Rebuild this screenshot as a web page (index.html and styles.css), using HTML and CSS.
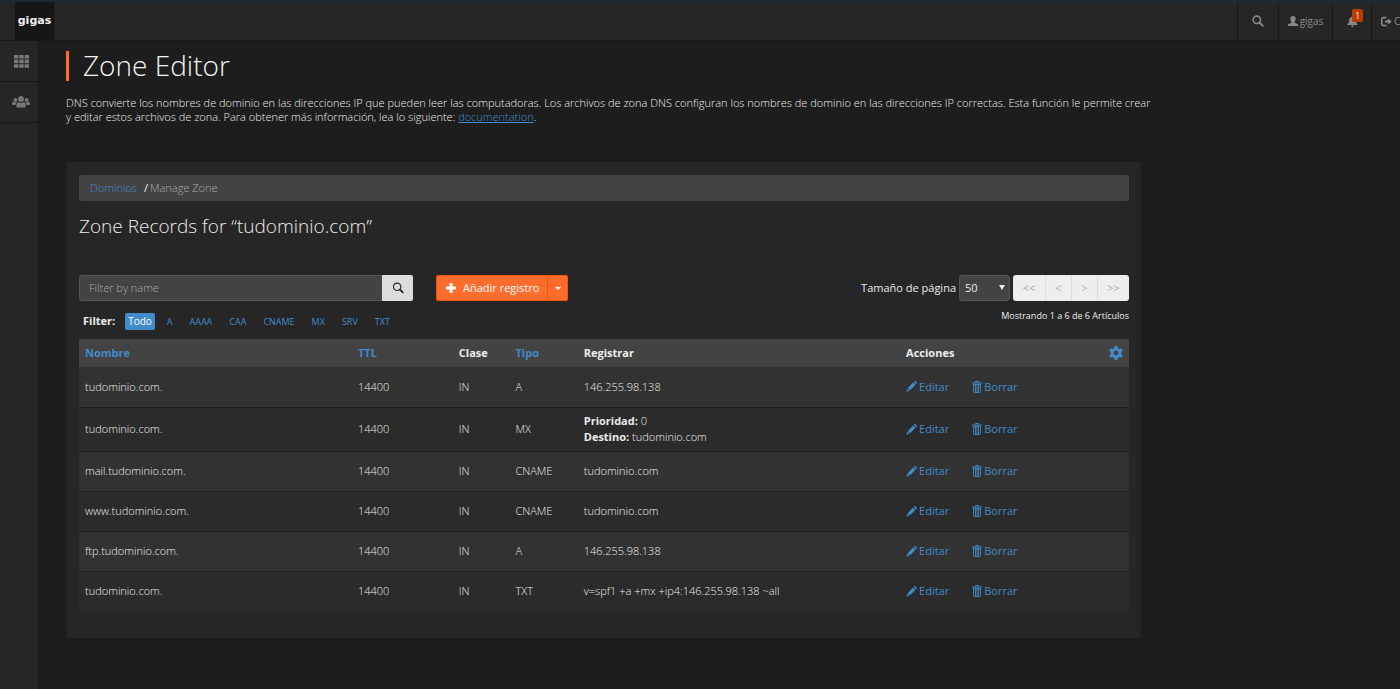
FILE: index.html
```html
<!DOCTYPE html>
<html lang="es">
<head>
<meta charset="utf-8">
<title>Zone Editor</title>
<link rel="stylesheet" href="styles.css">
</head>
<body>
<svg class="sprite" aria-hidden="true">
  <symbol id="search" viewBox="0 0 14 14"><circle cx="5.6" cy="5.6" r="4.3" fill="none" stroke="currentColor" stroke-width="1.8"/><path d="M9 9l3.6 3.6" stroke="currentColor" stroke-width="2.2" stroke-linecap="round"/></symbol>
  <symbol id="search-thin" viewBox="0 0 14 14"><circle cx="6" cy="5.6" r="4.3" fill="none" stroke="currentColor" stroke-width="1.3"/><path d="M9.2 8.8l3.4 3.4" stroke="currentColor" stroke-width="2" stroke-linecap="round"/></symbol>
  <symbol id="grid" viewBox="0 0 15 13"><path d="M0 0h4.4v3.6H0zM5.3 0h4.4v3.6H5.3zM10.6 0H15v3.6h-4.4zM0 4.6h4.4v3.6H0zM5.3 4.6h4.4v3.6H5.3zM10.6 4.6H15v3.6h-4.4zM0 9.2h4.4v3.6H0zM5.3 9.2h4.4v3.6H5.3zM10.6 9.2H15v3.6h-4.4z" fill="currentColor"/></symbol>
  <symbol id="users" viewBox="0 0 18 12"><g fill="currentColor"><circle cx="3.4" cy="4" r="1.9"/><circle cx="14.6" cy="4" r="1.9"/><circle cx="9" cy="3" r="2.9"/><path d="M4.3 10.2c0-2.4.8-4 2.2-4 .7.5 1.500.8 2.500.8s1.800-.3 2.500-.8c1.400 0 2.200 1.600 2.200 4 0 .9-.7 1.300-1.400 1.300H5.700c-.7 0-1.400-.4-1.400-1.300z"/><path d="M0 8c0-1.300.4-2.300 1.300-2.300.9.700 2.700.7 3.800 0C4.200 6.700 3.800 7.700 3.700 9H1.200C.5 9 0 8.600 0 8zM18 8c0-1.300-.4-2.300-1.300-2.300-.9.700-2.700.7-3.800 0 .9 1 1.300 2 1.400 3.300h2.500c.7 0 1.200-.4 1.200-1z"/></g></symbol>
  <symbol id="user" viewBox="0 0 10 10"><path d="M5 0c1.700 0 2.700 1.100 2.700 2.700 0 1.300-.5 2.500-1.200 3.100v.9L9.300 8c.5.200.7.600.7 1.100v.9H0v-.9C0 8.600.2 8.200.7 8l2.800-1.300v-.9C2.800 5.200 2.300 4 2.300 2.700 2.300 1.100 3.300 0 5 0z" fill="currentColor"/></symbol>
  <symbol id="bell" viewBox="0 0 10 11"><path d="M5 0c.5 0 .8.300.8.800C7.500 1.200 8.200 2.600 8.300 4.500 8.400 6.500 9 7.300 10 8.200V9H0v-.8c1-.9 1.600-1.700 1.700-3.700C1.800 2.600 2.500 1.200 4.200.8c0-.5.300-.8.800-.8zM3.600 9.600h2.800c-.1.800-.7 1.300-1.400 1.300s-1.300-.5-1.400-1.300z" fill="currentColor"/></symbol>
  <symbol id="logout" viewBox="0 0 11 10"><path d="M5.500 1H2.600C1.500 1 .8 1.700.8 2.800v4.400C.8 8.300 1.500 9 2.600 9h2.900" fill="none" stroke="currentColor" stroke-width="1.500"/><path d="M4 4h3V1.900L10.700 5 7 8.100V6H4z" fill="currentColor"/></symbol>
  <symbol id="plus" viewBox="0 0 10 10"><path d="M3.500 0h3v3.500H10v3H6.500V10h-3V6.500H0v-3h3.500z" fill="currentColor"/></symbol>
  <symbol id="pencil" viewBox="0 0 12 12"><path d="M.4 11.600l.9-3.400 2.500 2.500zM1.900 7.500l5.900-5.900 2.600 2.600-5.900 5.900zM8.500.9l.6-.6c.4-.4.9-.4 1.300 0l1.300 1.300c.4.400.4.900 0 1.300l-.6.600z" fill="currentColor"/></symbol>
  <symbol id="trash" viewBox="0 0 10 12"><path d="M3.500 1.500V.5h3v1M0 2h10" fill="none" stroke="currentColor"/><path d="M1.500 3v7.500c0 .6.300 1 1 1h5c.7 0 1-.4 1-1V3M1 3.500h8M3.500 4v7M5 4v7M6.500 4v7" fill="none" stroke="currentColor" stroke-width=".9"/></symbol>
  <symbol id="gear" viewBox="0 0 14 14"><circle cx="7" cy="7" r="3.800" fill="none" stroke="currentColor" stroke-width="2.800"/><g fill="currentColor"><path d="M5.600 0h2.800l.5 3H5.100z"/><path d="M5.600 0h2.800l.5 3H5.100z" transform="rotate(60 7 7)"/><path d="M5.600 0h2.800l.5 3H5.100z" transform="rotate(120 7 7)"/><path d="M5.600 0h2.800l.5 3H5.100z" transform="rotate(180 7 7)"/><path d="M5.600 0h2.800l.5 3H5.100z" transform="rotate(240 7 7)"/><path d="M5.600 0h2.800l.5 3H5.100z" transform="rotate(300 7 7)"/></g></symbol>
</svg>

<header class="topbar">
  <a class="logo" href="#">gigas</a>
  <nav class="topnav">
    <button class="nav-item nav-search" type="button" aria-label="Buscar"><svg class="icon-12"><use href="#search"/></svg></button>
    <a class="nav-item nav-user" href="#"><svg class="icon-10"><use href="#user"/></svg>gigas</a>
    <button class="nav-item nav-bell" type="button" aria-label="Notificaciones"><svg class="icon-11"><use href="#bell"/></svg><span class="badge">1</span></button>
    <a class="nav-item nav-exit" href="#"><svg class="icon-11"><use href="#logout"/></svg>C</a>
  </nav>
</header>

<div class="layout">
  <aside class="sidebar">
    <a class="side-item" href="#" aria-label="Herramientas"><svg class="icon-grid"><use href="#grid"/></svg></a>
    <a class="side-item" href="#" aria-label="Usuarios"><svg class="icon-users"><use href="#users"/></svg></a>
  </aside>

  <main class="content">
    <h1 class="title">Zone Editor</h1>
    <p class="intro">DNS convierte los nombres de dominio en las direcciones IP que pueden leer las computadoras. Los archivos de zona DNS configuran los nombres de dominio en las direcciones IP correctas. Esta función le permite crear y editar estos archivos de zona. Para obtener más información, lea lo siguiente: <a href="#">documentation</a>.</p>

    <section class="panel">
      <nav class="breadcrumb"><a href="#">Dominios</a><span class="slash">/</span><span class="current">Manage Zone</span></nav>
      <h2 class="subtitle">Zone Records for “tudominio.com”</h2>

      <div class="toolbar">
        <form class="search">
          <input class="search-input" type="text" placeholder="Filter by name" aria-label="Filter by name">
          <button class="search-btn" type="button" aria-label="Buscar"><svg class="icon-12"><use href="#search-thin"/></svg></button>
        </form>
        <div class="add">
          <button class="add-main" type="button"><svg class="icon-10"><use href="#plus"/></svg>Añadir registro</button>
          <button class="add-more" type="button" aria-label="Más opciones"><span class="caret"></span></button>
        </div>
        <div class="paging">
          <label for="size">Tamaño de página</label>
          <span class="select-wrap"><select id="size" class="size"><option>50</option></select></span>
          <div class="pager">
            <button type="button" disabled>&lt;&lt;</button><button type="button" disabled>&lt;</button><button type="button" disabled>&gt;</button><button type="button" disabled>&gt;&gt;</button>
          </div>
        </div>
      </div>

      <div class="filters">
        <strong class="filter-label">Filter:</strong>
        <a class="pill active" href="#">Todo</a>
        <a class="pill" href="#">A</a>
        <a class="pill" href="#">AAAA</a>
        <a class="pill" href="#">CAA</a>
        <a class="pill" href="#">CNAME</a>
        <a class="pill" href="#">MX</a>
        <a class="pill" href="#">SRV</a>
        <a class="pill" href="#">TXT</a>
        <span class="count">Mostrando 1 a 6 de 6 Artículos</span>
      </div>

      <table class="records">
        <colgroup><col class="c-name"><col class="c-ttl"><col class="c-class"><col class="c-type"><col class="c-record"><col class="c-actions"></colgroup>
        <thead>
          <tr>
            <th><a href="#">Nombre</a></th><th><a href="#">TTL</a></th><th>Clase</th><th><a href="#">Tipo</a></th><th>Registrar</th>
            <th><div class="actions-head">Acciones<button class="gear" type="button" aria-label="Configuración"><svg class="icon-14"><use href="#gear"/></svg></button></div></th>
          </tr>
        </thead>
        <tbody>
          <tr><td>tudominio.com.</td><td>14400</td><td>IN</td><td>A</td><td>146.255.98.138</td><td><div class="actions"><a href="#"><svg class="icon-11"><use href="#pencil"/></svg>Editar</a><a href="#"><svg class="icon-trash"><use href="#trash"/></svg>Borrar</a></div></td></tr>
          <tr><td>tudominio.com.</td><td>14400</td><td>IN</td><td>MX</td><td class="stacked"><strong>Prioridad:</strong> 0<br><strong>Destino:</strong> tudominio.com</td><td><div class="actions"><a href="#"><svg class="icon-11"><use href="#pencil"/></svg>Editar</a><a href="#"><svg class="icon-trash"><use href="#trash"/></svg>Borrar</a></div></td></tr>
          <tr><td>mail.tudominio.com.</td><td>14400</td><td>IN</td><td>CNAME</td><td>tudominio.com</td><td><div class="actions"><a href="#"><svg class="icon-11"><use href="#pencil"/></svg>Editar</a><a href="#"><svg class="icon-trash"><use href="#trash"/></svg>Borrar</a></div></td></tr>
          <tr><td>www.tudominio.com.</td><td>14400</td><td>IN</td><td>CNAME</td><td>tudominio.com</td><td><div class="actions"><a href="#"><svg class="icon-11"><use href="#pencil"/></svg>Editar</a><a href="#"><svg class="icon-trash"><use href="#trash"/></svg>Borrar</a></div></td></tr>
          <tr><td>ftp.tudominio.com.</td><td>14400</td><td>IN</td><td>A</td><td>146.255.98.138</td><td><div class="actions"><a href="#"><svg class="icon-11"><use href="#pencil"/></svg>Editar</a><a href="#"><svg class="icon-trash"><use href="#trash"/></svg>Borrar</a></div></td></tr>
          <tr><td>tudominio.com.</td><td>14400</td><td>IN</td><td>TXT</td><td>v=spf1 +a +mx +ip4:146.255.98.138 ~all</td><td><div class="actions"><a href="#"><svg class="icon-11"><use href="#pencil"/></svg>Editar</a><a href="#"><svg class="icon-trash"><use href="#trash"/></svg>Borrar</a></div></td></tr>
        </tbody>
      </table>
    </section>
  </main>
</div>
</body>
</html>
```

FILE: styles.css
```css
* { box-sizing: border-box; }
body {
  margin: 0;
  min-height: 100vh;
  display: flex;
  flex-direction: column;
  overflow-x: hidden;
  background: #1d1d1d;
  color: #ececec;
  font: 300 11px/14px "Open Sans", "Noto Sans", sans-serif;
}
button, input, select { font: inherit; color: inherit; margin: 0; }
button { padding: 0; border: 0; background: none; }
a { color: #428bca; text-decoration: none; }
svg { display: block; flex: none; }
strong { font-weight: 700; }
.sprite { position: absolute; width: 0; height: 0; }
.icon-10 { width: 10px; height: 10px; }
.icon-11 { width: 11px; height: 11px; }
.icon-12 { width: 12px; height: 12px; }
.icon-14 { width: 14px; height: 14px; }
.icon-trash { width: 10px; height: 12px; }
.icon-grid { width: 15px; height: 13px; }
.icon-users { width: 18px; height: 12px; }

.topbar {
  display: flex;
  justify-content: space-between;
  height: 41px;
  padding-left: 15px;
  background: #262626;
  border-top: 2px solid #1e2a33;
  border-bottom: 1px solid #181818;
}
.logo {
  display: flex;
  align-items: center;
  justify-content: center;
  width: 40px;
  background: #161616;
  border-right: 1px solid #1e1e1e;
  color: #f2f2f2;
  font-family: "DejaVu Sans", sans-serif;
  font-weight: 700;
}
.topnav { display: flex; }
.nav-item {
  position: relative;
  display: flex;
  align-items: center;
  justify-content: center;
  gap: 2px;
  border-left: 1px solid #181818;
  color: #8a8a8a;
  font-size: 10px;
  font-weight: 400;
}
.nav-search { width: 41px; }
.nav-user { width: 54px; }
.nav-bell { width: 39px; }
.nav-exit { width: 29px; padding-left: 9px; justify-content: flex-start; overflow: hidden; }
.badge {
  position: absolute;
  top: 7px;
  right: 8px;
  width: 11px;
  height: 13px;
  border-radius: 2px;
  background: #bb3b00;
  color: #f0e4de;
  font-size: 9px;
  line-height: 13px;
}

.layout { display: flex; flex: 1; }
.sidebar { width: 39px; flex: none; background: #262626; border-right: 1px solid #1a1a1a; }
.side-item {
  display: flex;
  align-items: center;
  justify-content: center;
  height: 41px;
  padding-left: 4px;
  border-bottom: 1px solid #181818;
  color: #777;
}
.content { flex: 1; max-width: 1102px; padding: 10px 0 20px 27px; }
.title {
  margin: 0;
  padding: 0 0 2px 14px;
  border-left: 3px solid #ff6c2c;
  color: #f2f2f2;
  font-size: 28px;
  line-height: 28px;
  font-weight: 300;
}
.intro { margin: 15px -16px 38px 0; }
.intro a { text-decoration: underline; }

.panel { padding: 13px 12px 27px 13px; border-radius: 3px; background: #262626; }
.breadcrumb {
  display: flex;
  padding: 6px 11px;
  border-radius: 3px;
  background: #434343;
}
.slash { margin: 0 2px 0 7px; font-weight: 400; }
.current { color: #aaa; }
.subtitle { margin: 13px 0 36px; font-size: 19px; line-height: 25px; font-weight: 300; }

.toolbar { display: flex; align-items: center; height: 26px; }
.search { display: flex; width: 334px; height: 26px; }
.search-input {
  flex: 1;
  min-width: 0;
  padding: 0 9px;
  border: 1px solid #555;
  border-right: 0;
  border-radius: 3px 0 0 3px;
  background: #434343;
}
.search-input::placeholder { color: #aaa; opacity: 1; }
.search-btn {
  display: flex;
  align-items: center;
  justify-content: center;
  width: 31px;
  border-radius: 0 2px 2px 0;
  background: #dcdcdc;
  color: #222;
}
.add { display: flex; margin-left: 23px; height: 26px; border: 1px solid #f4560f; border-radius: 2px; background: #ff6c2c; color: #fff; font-weight: 400; }
.add-main { display: flex; align-items: center; gap: 7px; padding: 0 8px 0 9px; }
.add-more { display: flex; align-items: center; justify-content: center; width: 20px; border-left: 1px solid #f4560f; }
.caret { border: 3px solid transparent; border-top-color: #fff; border-bottom: 0; }
.paging { display: flex; align-items: center; gap: 3px; margin-left: auto; font-weight: 400; }
.select-wrap { position: relative; }
.select-wrap::after {
  content: "";
  position: absolute;
  top: 10px;
  right: 5px;
  border: 3px solid transparent;
  border-top: 5px solid #eee;
  border-bottom: 0;
  pointer-events: none;
}
.size {
  display: block;
  appearance: none;
  width: 51px;
  height: 26px;
  padding: 0 5px;
  border: 1px solid #555;
  border-radius: 3px;
  background: #434343;
}
.pager { display: flex; height: 26px; border-radius: 3px; background: #eee; overflow: hidden; }
.pager button { width: 26px; border-left: 1px solid #ddd; color: #aaa; font-weight: 400; }
.pager button:first-child { width: 32px; border-left: 0; }
.pager button:last-child { width: 32px; }

.filters { display: flex; align-items: center; height: 26px; margin: 7px 0 5px; padding-left: 4px; }
.filter-label { margin-right: 10px; color: #eee; }
.pill { margin-right: 11px; padding: 0 3px; border-radius: 2px; font-size: 9px; line-height: 17px; font-weight: 400; }
.pill.active { margin-right: 9px; background: #428bca; color: #fff; font-size: 10px; }
.count { margin-left: auto; align-self: flex-start; font-size: 9px; line-height: 16px; font-weight: 400; }

.records { width: 100%; table-layout: fixed; border-collapse: collapse; }
.c-name { width: 26%; }
.c-ttl { width: 9.6%; }
.c-class { width: 5.4%; }
.c-type { width: 6.5%; }
.c-record { width: 30.7%; }
.records th { height: 28px; padding: 0 6px; background: #434343; color: #eee; font-weight: 700; text-align: left; }
.records td { height: 40px; padding: 0 6px; border-top: 1px solid #1e1e1e; }
.records tbody tr:first-child td { border-top: 0; }
.records tbody tr { background: #2b2b2b; }
.records tbody tr:nth-child(odd) { background: #323232; }
.records td.stacked { height: 44px; line-height: 16px; }
.actions-head { display: flex; align-items: center; justify-content: space-between; }
.gear { color: #428bca; }
.actions { display: flex; gap: 23px; font-weight: 400; }
.actions a { display: flex; align-items: center; gap: 2px; }
```
